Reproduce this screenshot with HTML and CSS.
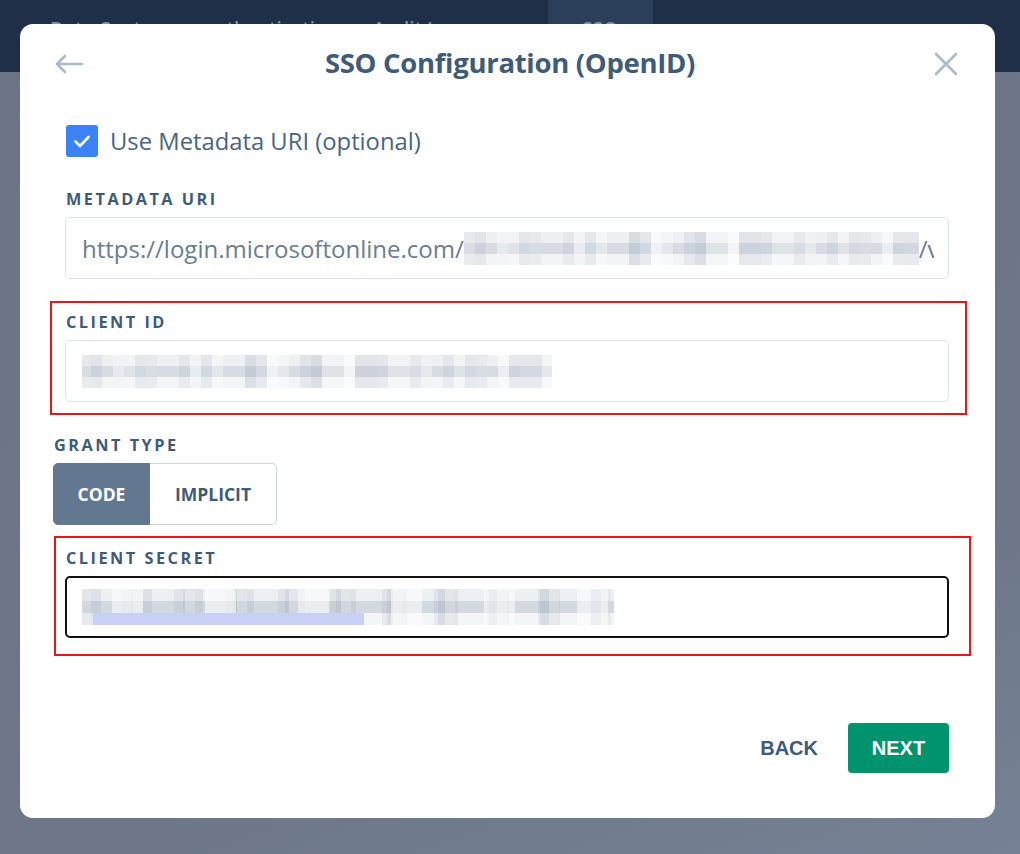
FILE: index.html
```html
<!DOCTYPE html>
<html lang="en">
<head>
  <meta charset="UTF-8">
  <meta name="viewport" content="width=device-width, initial-scale=1.0">
  <title>SSO Configuration</title>
  <link rel="stylesheet" href="styles.css">
</head>
<body>

  <!-- Page behind the dialog -->
  <header class="topbar">
    <nav class="topnav">
      <span class="nav-item">Data Centers</span>
      <span class="nav-item">authentication</span>
      <span class="nav-item">Audit Log</span>
      <span class="nav-item active">SSO</span>
    </nav>
  </header>
  <div class="backdrop"></div>

  <!-- Dialog -->
  <div class="modal">
    <div class="modal-header">
      <button class="icon-btn" aria-label="Back">
        <svg width="30" height="24" viewBox="0 0 30 24">
          <path d="M28 12H3M11 4L3 12l8 8" fill="none" stroke="#a9bacb" stroke-width="2.6" stroke-linecap="round" stroke-linejoin="round"/>
        </svg>
      </button>
      <h2>SSO Configuration (OpenID)</h2>
      <button class="icon-btn" aria-label="Close">
        <svg width="24" height="24" viewBox="0 0 24 24">
          <path d="M2 2l20 20M22 2L2 22" fill="none" stroke="#a9bacb" stroke-width="2.6" stroke-linecap="round"/>
        </svg>
      </button>
    </div>

    <div class="modal-body">
      <label class="check-row">
        <span class="checkbox">
          <svg width="20" height="20" viewBox="0 0 20 20">
            <path d="M3.5 10.5l4.5 4.5 8.5-9" fill="none" stroke="#fff" stroke-width="2.6" stroke-linecap="round" stroke-linejoin="round"/>
          </svg>
        </span>
        Use Metadata URI (optional)
      </label>

      <div class="field">
        <div class="field-label">METADATA URI</div>
        <div class="input">
          <div class="input-inner">
            <span class="input-text">https://login.microsoftonline.com/</span>
            <span class="mosaic mosaic-uri"></span>
            <span class="input-text">/v</span>
          </div>
        </div>
      </div>

      <div class="field highlight highlight-id">
        <div class="field-label">CLIENT ID</div>
        <div class="input">
          <div class="input-inner">
            <span class="mosaic mosaic-id"></span>
          </div>
        </div>
      </div>

      <div class="field grant">
        <div class="field-label">GRANT TYPE</div>
        <div class="toggle">
          <button class="toggle-btn selected">CODE</button>
          <button class="toggle-btn">IMPLICIT</button>
        </div>
      </div>

      <div class="field highlight highlight-secret">
        <div class="field-label">CLIENT SECRET</div>
        <div class="input focused">
          <div class="input-inner">
            <span class="mosaic mosaic-secret"></span>
          </div>
        </div>
      </div>
    </div>

    <div class="modal-footer">
      <button class="btn-back">BACK</button>
      <button class="btn-next">NEXT</button>
    </div>
  </div>

</body>
</html>
```

FILE: styles.css
```css
/* Reset */
* {
  margin: 0;
  padding: 0;
  box-sizing: border-box;
}

body {
  width: 1020px;
  height: 854px;
  overflow: hidden;
  font-family: "Open Sans", Arial, sans-serif;
  background: #6b7587;
  position: relative;
}

button {
  font: inherit;
  border: none;
  background: none;
  cursor: pointer;
}

/* Page behind */
.topbar {
  height: 72px;
  background: #1f2f48;
}

.topnav {
  display: flex;
  height: 100%;
  padding-left: 50px;
}

.nav-item {
  display: flex;
  align-items: center;
  padding: 0 34px 14px 0;
  color: #8391a3;
  font-size: 19px;
  font-weight: 600;
}

.nav-item.active {
  margin-left: 54px;
  padding: 0 0 14px;
  background: #2b3f5a;
  width: 105px;
  justify-content: center;
}

.backdrop {
  height: 782px;
  background: linear-gradient(160deg, #6a7486 0%, #6d7789 70%, #778195 100%);
}

/* Modal */
.modal {
  position: absolute;
  left: 20px;
  top: 24px;
  width: 975px;
  height: 794px;
  background: #fff;
  border-radius: 13px;
  display: flex;
  flex-direction: column;
  padding: 22px 46px 45px 45px;
}

.modal-header {
  display: flex;
  align-items: center;
  justify-content: space-between;
  height: 36px;
  margin: 0 -9px 0 -11px;
}

.modal-header h2 {
  font-size: 27.5px;
  font-weight: 700;
  color: #3f5b7a;
  letter-spacing: -0.3px;
  margin: 0 0 4px 2px;
}

.icon-btn {
  display: flex;
  align-items: center;
  justify-content: center;
}

.modal-body {
  margin-top: 43px;
}

/* Checkbox */
.check-row {
  display: flex;
  align-items: center;
  gap: 12px;
  height: 32px;
  font-size: 23.8px;
  color: #4a6582;
}

.checkbox {
  width: 32px;
  height: 32px;
  border-radius: 3px;
  background: #3b82f6;
  display: flex;
  align-items: center;
  justify-content: center;
  margin-left: 1px;
}

/* Fields */
.field {
  margin-top: 22px;
}

.check-row + .field {
  margin-top: 32px;
}

.field-label {
  font-size: 16.3px;
  font-weight: 700;
  line-height: 20px;
  letter-spacing: 2.5px;
  color: #3f5b7a;
  margin-bottom: 8px;
  padding-left: 1px;
}

.input {
  display: flex;
  align-items: center;
  height: 62px;
  padding: 0 14px 0 16px;
  border: 1px solid #dde4ec;
  border-radius: 5px;
}

.input.focused {
  border: 2px solid #111;
  padding: 0 13px 0 15px;
}

.input-inner {
  flex: 1;
  display: flex;
  align-items: center;
  overflow: hidden;
  white-space: nowrap;
}

.input-text {
  font-size: 24px;
  color: #6a7d93;
}

/* Pixelated (redacted) values */
.mosaic {
  display: block;
  flex-shrink: 0;
  height: 33px;
  background:
    repeating-linear-gradient(90deg,
      rgba(255, 255, 255, 0) 0 33px,
      rgba(255, 255, 255, 0.5) 33px 44px,
      rgba(255, 255, 255, 0) 44px 77px),
    repeating-linear-gradient(90deg,
      rgba(110, 125, 150, 0.10) 0 22px,
      rgba(255, 255, 255, 0) 22px 55px),
    repeating-linear-gradient(90deg,
      rgba(255, 255, 255, 0.35) 0 11px,
      rgba(255, 255, 255, 0) 11px 33px,
      rgba(110, 125, 150, 0.08) 33px 44px,
      rgba(255, 255, 255, 0.2) 44px 66px),
    linear-gradient(#eef0f3 0 11px, #d6dce3 11px 22px, #f2f4f6 22px 33px);
}

.mosaic-uri {
  width: 455px;
}

.mosaic-id {
  width: 472px;
  margin-left: -2px;
}

.mosaic-secret {
  width: 533px;
  margin-left: -1px;
  height: 36px;
  background:
    linear-gradient(90deg, transparent 0 12px, #c8d0f6 12px 283px, transparent 283px) bottom / 100% 12px no-repeat,
    repeating-linear-gradient(90deg,
      rgba(255, 255, 255, 0) 0 31px,
      rgba(255, 255, 255, 0.55) 31px 62px,
      rgba(255, 255, 255, 0) 62px 93px),
    repeating-linear-gradient(90deg,
      rgba(110, 125, 150, 0.12) 0 20px,
      rgba(255, 255, 255, 0) 20px 51px),
    repeating-linear-gradient(90deg,
      rgba(255, 255, 255, 0.3) 0 10px,
      rgba(255, 255, 255, 0) 10px 41px,
      rgba(110, 125, 150, 0.1) 41px 52px),
    linear-gradient(#edf0f3 0 12px, #d3d9e0 12px 24px, #f4f5f7 24px 36px);
}

/* Red highlight boxes */
.highlight {
  border: 2px solid #e8161a;
}

.highlight-id {
  margin: 22px -18px 0 -15px;
  padding: 9px 16px 11px 13px;
}

.highlight-secret {
  margin: 11px -22px 0 -11px;
  padding: 10px 20px 16px 9px;
}

/* Grant type toggle */
.grant {
  margin: 20px 0 0 -12px;
}

.toggle {
  display: flex;
}

.toggle-btn {
  height: 62px;
  font-size: 17.5px;
  font-weight: 700;
  color: #3f5b7a;
  border: 1px solid #cad5e0;
  border-left: none;
  border-radius: 0 5px 5px 0;
  background: #fff;
  width: 127px;
}

.toggle-btn.selected {
  width: 97px;
  color: #fff;
  background: #627891;
  border: 1px solid #627891;
  border-radius: 5px 0 0 5px;
}

/* Footer */
.modal-footer {
  margin-top: auto;
  display: flex;
  justify-content: flex-end;
  align-items: center;
  gap: 30px;
}

.btn-back,
.btn-next {
  font-family: "Liberation Sans", Arial, sans-serif;
  font-size: 20px;
  font-weight: 700;
}

.btn-back {
  color: #3f5b7a;
}

.btn-next {
  width: 101px;
  height: 50px;
  color: #fff;
  background: #00946e;
  border-radius: 4px;
}
```
